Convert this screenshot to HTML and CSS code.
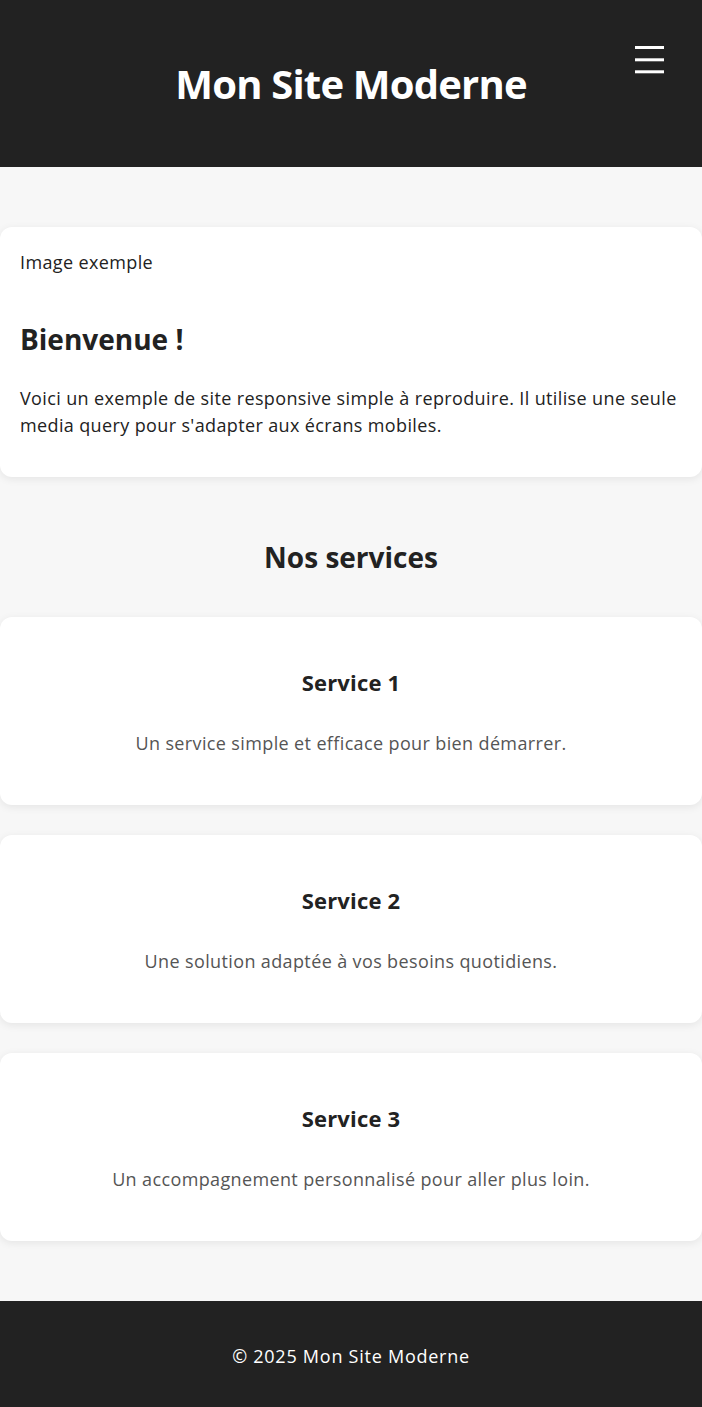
FILE: index.html
```html
<!DOCTYPE html>
<html lang="fr">
<head>
<meta charset="utf-8">
<title>Mon Site Moderne</title>
<link rel="stylesheet" href="styles.css">
</head>
<body>
<header class="site-header">
  <h1 class="site-title">Mon Site Moderne</h1>
  <button class="menu-toggle" aria-label="Menu">
    <svg width="29" height="28" viewBox="0 0 29 28" aria-hidden="true">
      <rect x="0" y="0" width="29" height="3" fill="#fff"/>
      <rect x="0" y="12.3" width="29" height="3" fill="#fff"/>
      <rect x="0" y="24.3" width="29" height="3" fill="#fff"/>
    </svg>
  </button>
</header>
<main class="main">
  <section class="card intro">
    <div class="image-alt">Image exemple</div>
    <h2 class="intro-title">Bienvenue !</h2>
    <p class="intro-text">Voici un exemple de site responsive simple à reproduire. Il utilise une seule media query pour s'adapter aux écrans mobiles.</p>
  </section>
  <section class="services">
    <h2 class="services-title">Nos services</h2>
    <div class="service-list">
      <article class="card service">
        <h3 class="service-title">Service 1</h3>
        <p class="service-text">Un service simple et efficace pour bien démarrer.</p>
      </article>
      <article class="card service">
        <h3 class="service-title">Service 2</h3>
        <p class="service-text">Une solution adaptée à vos besoins quotidiens.</p>
      </article>
      <article class="card service">
        <h3 class="service-title">Service 3</h3>
        <p class="service-text">Un accompagnement personnalisé pour aller plus loin.</p>
      </article>
    </div>
  </section>
</main>
<footer class="site-footer">
  <p class="footer-text">© 2025 Mon Site Moderne</p>
</footer>
</body>
</html>
```
FILE: styles.css
```css
* { box-sizing: border-box; }
html, body { margin: 0; padding: 0; }
body {
  font-family: "Open Sans", "Noto Sans", sans-serif;
  font-size: 18px;
  line-height: 1.5;
  letter-spacing: 0.37px;
  color: #222;
  background: #f7f7f7;
}
.site-header {
  position: relative;
  background: #222;
  color: #fff;
  height: 167px;
  display: flex;
  align-items: center;
  justify-content: center;
}
.site-title {
  margin: 0;
  font-size: 40px;
  line-height: 60px;
  font-weight: 700;
  letter-spacing: -0.8px;
  padding-top: 1px;
}
.menu-toggle {
  position: absolute;
  top: 46px;
  right: 38px;
  padding: 0;
  border: 0;
  background: none;
  line-height: 0;
  cursor: pointer;
}
.main {
  padding: 60px 0;
}
.card {
  background: #fff;
  border-radius: 12px;
  box-shadow: 0 2px 8px rgba(0, 0, 0, 0.08);
}
.intro {
  padding: 20px;
}
.image-alt {
  line-height: 27px;
  padding-top: 2px;
  margin-bottom: 42px;
}
.intro-title {
  font-size: 28px;
  line-height: 42px;
  letter-spacing: 0;
  margin: 0 0 24.5px;
}
.intro-text {
  margin: 0 0 18px;
}
.services {
  margin-top: 60px;
}
.services-title {
  text-align: center;
  font-size: 28px;
  line-height: 42px;
  letter-spacing: 0;
  margin: -1px 0 39px;
}
.service-list {
  display: flex;
  flex-direction: column;
  gap: 30px;
}
.service {
  text-align: center;
  padding: 30px 20px;
  height: 188px;
}
.service-title {
  font-size: 22px;
  line-height: 33px;
  letter-spacing: 0.2px;
  margin: 19.5px 0 31px;
}
.service-text {
  margin: 0;
  color: #555;
}
.site-footer {
  background: #222;
  color: #fff;
  text-align: center;
  padding: 42px 20px 37px;
}
.footer-text {
  margin: 0;
  line-height: 27px;
  letter-spacing: 0.75px;
}
```
